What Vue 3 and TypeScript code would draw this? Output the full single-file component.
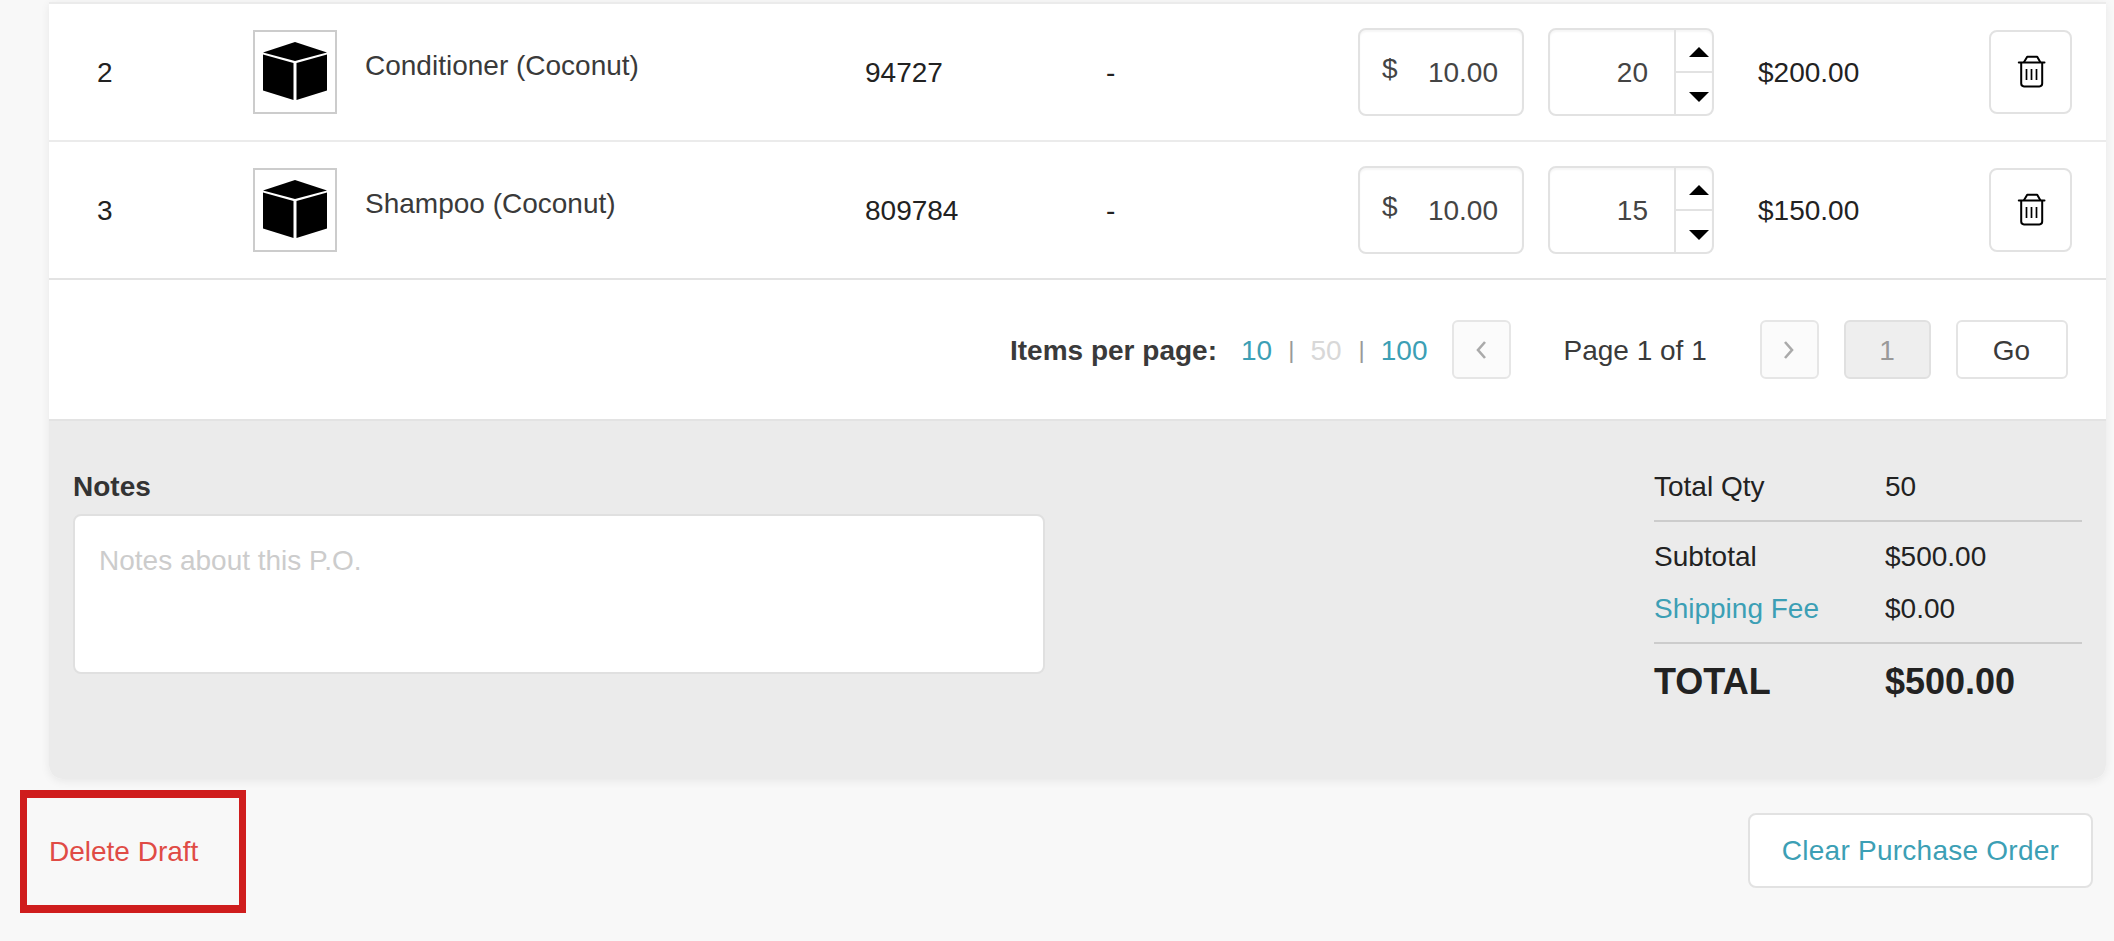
<script setup lang="ts">
interface Item { no: number; name: string; sku: string; variant: string; price: string; qty: number; total: string }
const items: Item[] = [
  { no: 2, name: 'Conditioner (Coconut)', sku: '94727', variant: '-', price: '10.00', qty: 20, total: '$200.00' },
  { no: 3, name: 'Shampoo (Coconut)', sku: '809784', variant: '-', price: '10.00', qty: 15, total: '$150.00' },
]
</script>

<template>
  <div class="page">
    <div class="card">
      <div class="table">
        <div v-for="item in items" :key="item.no" class="row">
          <div class="no">{{ item.no }}</div>
          <div class="product">
            <div class="thumb">
              <svg viewBox="0 0 80 80" width="80" height="80">
                <polygon points="40,10 72,20.5 40,29 8,20.5" fill="#000" />
                <polygon points="8,22.5 38.5,31 38.5,68 8,58.5" fill="#000" />
                <polygon points="41.5,31 72,22.5 72,58.5 41.5,68" fill="#000" />
              </svg>
            </div>
            <div class="name">{{ item.name }}</div>
          </div>
          <div class="cell">{{ item.sku }}</div>
          <div class="cell">{{ item.variant }}</div>
          <div class="field price">
            <span class="currency">$</span>
            <span class="amount">{{ item.price }}</span>
          </div>
          <div class="field qty">
            <span class="qty-value">{{ item.qty }}</span>
            <div class="spin">
              <div class="spin-btn"><span class="tri up"></span></div>
              <div class="spin-btn"><span class="tri down"></span></div>
            </div>
          </div>
          <div class="cell">{{ item.total }}</div>
          <div class="trash">
            <svg viewBox="0 0 40 40" width="40" height="40" fill="none" stroke="#000" stroke-width="2">
              <path d="M7.8 10.4H33.5" stroke-linecap="round" />
              <path d="M12.8 10.4L16.2 4.8H26.2L29.5 10.4" stroke-linejoin="round" />
              <path d="M10.2 10.4V31.6A2.8 2.8 0 0 0 13 34.4H28.4A2.8 2.8 0 0 0 31.2 31.6V10.4" />
              <path d="M15.5 17V28M20.5 17V28M25.5 17V28" stroke-width="1.7" />
            </svg>
          </div>
        </div>
      </div>

      <div class="pager">
        <strong class="per-label">Items per page:</strong>
        <span class="link">10</span>
        <span class="sep first-sep">|</span>
        <span class="muted">50</span>
        <span class="sep">|</span>
        <span class="link">100</span>
        <div class="page-btn prev">
          <svg viewBox="0 0 14 20" width="14" height="20" fill="none" stroke="#aaa" stroke-width="2.6"><path d="M11 2L4 10L11 18" /></svg>
        </div>
        <span class="page-text">Page 1 of 1</span>
        <div class="page-btn next">
          <svg viewBox="0 0 14 20" width="14" height="20" fill="none" stroke="#aaa" stroke-width="2.6"><path d="M3 2L10 10L3 18" /></svg>
        </div>
        <div class="page-input">1</div>
        <div class="go">Go</div>
      </div>

      <div class="panel">
        <div class="notes">
          <div class="notes-label">Notes</div>
          <div class="notes-box">Notes about this P.O.</div>
        </div>
        <div class="summary">
          <div class="sum-row first"><span>Total Qty</span><span>50</span></div>
          <div class="sum-row sub"><span>Subtotal</span><span>$500.00</span></div>
          <div class="sum-row ship"><span class="link">Shipping Fee</span><span>$0.00</span></div>
          <div class="sum-row grand"><span>TOTAL</span><span>$500.00</span></div>
        </div>
      </div>
    </div>

    <div class="actions">
      <div class="delete-box">Delete Draft</div>
      <div class="clear">Clear Purchase Order</div>
    </div>
  </div>
</template>

<style>
html, body { margin: 0; background: #f8f8f8; overflow: hidden; }
</style>

<style scoped>
.page {
  height: 941px;
  box-sizing: border-box;
  padding: 2px 0 0;
  font-family: "Liberation Sans", Arial, sans-serif;
  font-size: 28px;
  color: #222;
  background: #f8f8f8;
  overflow: hidden;
}
.card {
  margin-left: 49px;
  width: 2057px;
  background: #fff;
  border-radius: 0 0 14px 14px;
  box-shadow: 0 2px 10px rgba(0, 0, 0, 0.07);
}
.table { border-top: 2px solid #ebebeb; }
.row {
  display: grid;
  grid-template-columns: 156px 612px 241px 252px 190px 210px 231px 83px;
  align-items: center;
  height: 136px;
  padding-left: 48px;
  border-bottom: 2px solid #ebebeb;
}
.row:last-child { border-bottom-color: #e3e3e3; }
.no, .cell { padding-top: 2px; }
.product { display: flex; align-items: flex-start; }
.thumb {
  flex: none;
  box-sizing: border-box;
  width: 84px;
  height: 84px;
  border: 2px solid #ccc;
  background: #fff;
}
.thumb svg { display: block; }
.name {
  margin: 21px 0 0 28px;
  line-height: 30px;
  color: #3a3a3a;
}
.field {
  box-sizing: border-box;
  display: flex;
  height: 88px;
  border: 2px solid #e2e2e2;
  border-radius: 8px;
  box-shadow: inset 0 2px 2px rgba(0, 0, 0, 0.04);
  color: #444;
}
.price {
  width: 166px;
  align-items: center;
  justify-content: space-between;
  padding: 0 24px 0 22px;
}
.currency { margin-top: -6px; }
.amount { padding-top: 2px; }
.qty { width: 166px; }
.qty-value {
  flex: 1;
  align-self: center;
  padding: 2px 26px 0 0;
  text-align: right;
}
.spin {
  flex: none;
  width: 36px;
  display: flex;
  flex-direction: column;
  border-left: 2px solid #e2e2e2;
}
.spin-btn {
  flex: 1;
  display: flex;
  align-items: center;
  justify-content: center;
  padding-left: 9px;
}
.spin-btn:first-child { border-bottom: 2px solid #e2e2e2; }
.tri {
  width: 0;
  height: 0;
  border-left: 10px solid transparent;
  border-right: 10px solid transparent;
}
.tri.up { border-bottom: 10px solid #000; margin-top: 2px; }
.tri.down { border-top: 10px solid #000; margin-top: 7px; }
.trash {
  box-sizing: border-box;
  width: 83px;
  height: 84px;
  border: 2px solid #e2e2e2;
  border-radius: 8px;
  display: flex;
  align-items: center;
  justify-content: center;
}
.pager {
  box-sizing: border-box;
  height: 141px;
  display: flex;
  align-items: center;
  padding: 0 37px 0 961px;
  border-bottom: 2px solid #e3e3e3;
}
.per-label, .page-text, .go, .pager > .link, .pager > .muted { padding-top: 2px; }
.per-label { width: 231px; color: #3a3a3a; flex: none; }
.link { color: #3c9fb5; }
.muted { color: #d8d8d8; }
.sep { color: #999; margin: 0 16px 0 17px; font-size: 24px; }
.first-sep { margin-left: 16px; }
.page-btn {
  box-sizing: border-box;
  flex: none;
  width: 59px;
  height: 59px;
  border: 2px solid #e6e6e6;
  border-radius: 6px;
  background: #fbfbfb;
  display: flex;
  align-items: center;
  justify-content: center;
}
.prev { margin-left: 24px; }
.page-text { flex: none; width: 249px; padding-left: 53px; box-sizing: border-box; color: #3a3a3a; }
.page-input {
  box-sizing: border-box;
  flex: none;
  width: 87px;
  height: 59px;
  margin-left: 25px;
  padding-top: 2px;
  border: 2px solid #e0e0e0;
  border-radius: 6px;
  background: #eee;
  color: #999;
  display: flex;
  align-items: center;
  justify-content: center;
}
.go {
  box-sizing: border-box;
  flex: none;
  width: 112px;
  height: 59px;
  margin-left: 25px;
  border: 2px solid #e4e4e4;
  border-radius: 6px;
  display: flex;
  align-items: center;
  justify-content: center;
  color: #3a3a3a;
}
.panel {
  box-sizing: border-box;
  height: 358px;
  background: #ebebeb;
  border-radius: 0 0 14px 14px;
  display: flex;
  justify-content: space-between;
  padding: 51px 24px 0 24px;
}
.notes { width: 972px; }
.notes-label {
  font-weight: 700;
  line-height: 30px;
  color: #333;
  margin-bottom: 12px;
}
.notes-box {
  box-sizing: border-box;
  height: 160px;
  padding: 28px 24px;
  line-height: 34px;
  background: #fff;
  border: 2px solid #e0e0e0;
  border-radius: 8px;
  color: #ccc;
}
.summary { width: 428px; color: #222; }
.sum-row { display: flex; line-height: 30px; }
.sum-row span:first-child { width: 231px; flex: none; }
.first { padding-bottom: 18px; border-bottom: 2px solid #ccc; }
.sub { padding-top: 20px; }
.ship { padding-top: 22px; padding-bottom: 18px; border-bottom: 2px solid #ccc; }
.grand {
  padding-top: 19px;
  font-size: 36px;
  line-height: 38px;
  font-weight: 700;
}
.actions {
  display: flex;
  align-items: flex-start;
  justify-content: space-between;
  padding: 11px 21px 0 20px;
}
.delete-box {
  box-sizing: border-box;
  width: 226px;
  height: 123px;
  padding-left: 22px;
  display: flex;
  align-items: center;
  border-style: solid;
  border-color: #cf1d1d;
  border-width: 8px 7px;
  color: #e04b45;
}
.clear {
  box-sizing: border-box;
  margin-top: 23px;
  width: 345px;
  height: 75px;
  display: flex;
  align-items: center;
  justify-content: center;
  background: #fff;
  border: 2px solid #e2e2e2;
  border-radius: 8px;
  color: #3c9fb5;
  letter-spacing: 0.25px;
}
</style>
